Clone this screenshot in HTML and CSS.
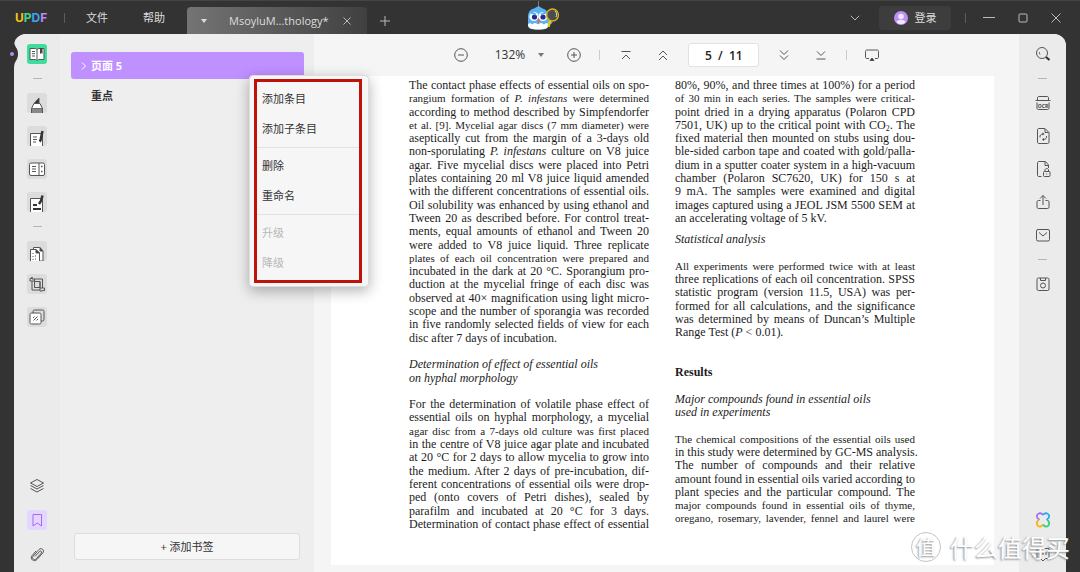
FILE: index.html
```html
<!DOCTYPE html>
<html lang="zh-CN">
<head>
<meta charset="utf-8">
<title>UPDF</title>
<link rel="stylesheet" href="styles.css">
</head>
<body>
<header class="titlebar">
  <div class="logo"><span class="u">U</span><span class="p">P</span><span class="d">D</span><span class="f">F</span></div>
  <span class="vsep"></span>
  <nav class="menus"><button type="button">文件</button><button type="button">帮助</button></nav>
  <div class="tab">
    <span class="tab-caret"></span>
    <span class="tab-name">MsoyluM...thology*</span>
    <button type="button" class="icon-btn" aria-label="关闭标签"><svg width="8" height="8" viewBox="0 0 8 8"><path d="M.5.5l7 7M7.500.5l-7 7"/></svg></button>
  </div>
  <button type="button" class="icon-btn new-tab" aria-label="新标签"><svg width="10" height="10" viewBox="0 0 10 10"><path d="M5 0v10M0 5h10"/></svg></button>
  <svg class="owl" width="34" height="30" viewBox="0 0 34 30">
    <path d="M12.500 0v7" stroke="#999" stroke-width=".7"/>
    <path d="M8 7.500l4.500-2.500 4 2.500c4 1 6 4 6 8.500l4 6-4 2c0 4-4 4.500-10.500 4.500S2 28 2 24V16c0-5 2-7.500 6-8.500z" fill="#59b2f4"/>
    <path d="M2 23.500c2-2 3-1 4 0 2-2 4-2 6 0 2-2 4-2 6 0 2-2 4-1 4.500 0 0 4-3 5-10 5S2 27.500 2 23.500z" fill="#fff"/>
    <circle cx="8" cy="15.500" r="4.500" fill="#fff"/><circle cx="17" cy="15.500" r="4.500" fill="#fff"/>
    <circle cx="8.500" cy="16" r="2.600" fill="#29288f"/><circle cx="17" cy="16" r="2.600" fill="#29288f"/>
    <path d="M4 11l6 2.500M21 11l-6 2.500" stroke="#59b2f4" stroke-width="2"/>
    <path d="M11 19l1.500-1.500L14 19l-1.500 4z" fill="#f06a2c"/>
    <circle cx="26.500" cy="14" r="6" fill="#555" fill-opacity=".75" stroke="#d8b414" stroke-width="1.300"/>
    <path d="M29 10c2 2 2 4 1 6" stroke="#ddd" fill="none"/><path d="M24 20l-1.500 6" stroke="#e8cc16" stroke-width="2.500"/>
  </svg>
  <div class="window-tools">
    <button type="button" class="icon-btn" aria-label="更多"><svg width="10" height="6" viewBox="0 0 10 6"><path d="M.8.800L5 5 9.200.8"/></svg></button>
    <button type="button" class="login"><svg width="14" height="14" viewBox="0 0 14 14"><circle cx="7" cy="7" r="7" fill="#bd8df8"/><circle cx="7" cy="5.500" r="2.800" fill="#f1e7ff"/><path d="M2.500 11c1-3 8-3 9 0-2 3-7 3-9 0z" fill="#f1e7ff"/></svg>登录</button>
    <span class="vsep"></span>
    <button type="button" class="icon-btn" aria-label="最小化"><svg width="12" height="10" viewBox="0 0 12 10"><path d="M0 4.500h12"/></svg></button>
    <button type="button" class="icon-btn" aria-label="最大化"><svg width="10" height="10" viewBox="0 0 10 10"><rect x="1" y="1" width="8" height="8" rx="1"/></svg></button>
    <button type="button" class="icon-btn" aria-label="关闭"><svg width="10" height="10" viewBox="0 0 10 10"><path d="M.5.5l9 9M9.500.5l-9 9"/></svg></button>
  </div>
</header>

<main class="workspace">
  <aside class="rail rail-left">
    <svg class="notch" width="6" height="28" viewBox="0 0 6 28"><path d="M0 0C0 8 4 7 4 14S0 20 0 28z" fill="#333"/></svg>
    <span class="dot"></span>
    <button type="button" class="tool active" aria-label="阅读"><svg width="20" height="20" viewBox="0 0 20 20"><path d="M3 4.500h5.500L10 5.500l1.500-1H17v11h-5.500l-1.500.8-1.500-.8H3z" fill="#fff"/><path d="M10 5.500v10M5 7.500h3M5 9.700h3M5 12h3"/><path d="M13 4h2.500v6l-1.200-1-1.300 1z" fill="#444" stroke="none"/></svg></button>
    <span class="dash"></span>
    <button type="button" class="tool" aria-label="注释"><svg width="20" height="20" viewBox="0 0 20 20"><path d="M7 10.500L12 5v5.500z" fill="#333"/><path d="M7 10.500h6l2.500 5h-11z" fill="#fff"/><path d="M4 15.500h12V20H4z" fill="#888" stroke="none"/><path d="M4.500 20v-4.500M15.500 20v-4.500"/></svg></button>
    <button type="button" class="tool" aria-label="编辑"><svg width="20" height="20" viewBox="0 0 20 20"><path d="M3.500 20V7.500h12V20" fill="#fff"/><path d="M6 11h4M6 13.500h4M6 16h3"/><path d="M15.500 5l-2 9.500-1 1" stroke="#333" stroke-width="2.500"/></svg></button>
    <button type="button" class="tool" aria-label="表单"><svg width="20" height="20" viewBox="0 0 20 20"><rect x="2.500" y="4" width="15" height="12.500" rx="1.500" fill="#fff"/><path d="M12 4v12.500M5 7.500h4M5 10h4M5 12.500h4"/><path d="M14 7.500h1.500M14 12.500h1.500" stroke-width="1.600"/></svg></button>
    <button type="button" class="tool" aria-label="签名"><svg width="20" height="20" viewBox="0 0 20 20"><path d="M3.500 20V6.500h12V20" fill="#fff"/><path d="M6 13h4M6 17h8" stroke="#333" stroke-width="2"/><path d="M15.500 3.500L14 9l-2 3" stroke="#333" stroke-width="2.500"/></svg></button>
    <span class="dash"></span>
    <button type="button" class="tool" aria-label="页面"><svg width="20" height="20" viewBox="0 0 20 20"><path d="M6.500 8V6.500h6l3.500 3.500V20h-3" fill="#fff"/><path d="M3.500 20V8.500H9l3.500 3.500v8" fill="#fff"/><path d="M9 8.500V12h3.500zM13 6.500V10h3z" fill="#333"/><path d="M6 12v1M6 15v1M8 15h1M6 18v1M8 18h1"/></svg></button>
    <button type="button" class="tool" aria-label="裁剪"><svg width="20" height="20" viewBox="0 0 20 20"><path fill-rule="evenodd" d="M5 3v2h10.500v9H17.500v2.500H15.500V17H13V16H5V7H3V4.500h2zM7.500 7.500v6h5.500v-6z" fill="#ddd"/><path d="M7.500 5v8.500M13 16V7.500M5 7h2.500M13 14h2.500"/></svg></button>
    <button type="button" class="tool" aria-label="水印"><svg width="20" height="20" viewBox="0 0 20 20"><rect x="6" y="3" width="11" height="11" rx="1.500" fill="#ddd"/><rect x="3" y="6" width="11" height="11" rx="1.500" fill="#fff"/><path d="M6 11l1.500-1.500M6.500 13.500l4-4M9.500 13.500L11 12"/></svg></button>
    <div class="rail-end">
      <button type="button" class="tool plain" aria-label="图层"><svg width="20" height="20" viewBox="0 0 20 20"><path d="M10 3.500L16.500 7 10 10.500 3.500 7zM3.500 9.500L10 13l6.500-3.500M3.500 12.500L10 16l6.500-3.500"/></svg></button>
      <button type="button" class="tool marked" aria-label="书签"><svg width="20" height="20" viewBox="0 0 20 20"><path d="M6 4.500h8.500V16l-4.200-3L6 16z"/></svg></button>
      <button type="button" class="tool plain" aria-label="附件"><svg width="20" height="20" viewBox="0 0 20 20"><path d="M8 12.500l4.500-5c1.200-1.200 2.800.3 1.800 1.500l-5 5.800c-2 2-5-.3-3.200-2.600l5.800-6.600c2.600-2.500 6 .7 4 3.200L10 15.500c-3 3-7.500-.5-5-3.800l4-4.700"/></svg></button>
    </div>
  </aside>

  <section class="bookmarks">
    <ul>
      <li class="selected"><svg width="6" height="8" viewBox="0 0 6 8"><path d="M1 .5L4.500 4 1 7.500" fill="none" stroke="#fff"/></svg>页面 5</li>
      <li>重点</li>
    </ul>
    <button type="button" class="add">+ 添加书签</button>
  </section>

  <section class="viewer">
    <div class="toolbar">
      <button type="button" class="tb" aria-label="缩小"><svg width="16" height="16" viewBox="0 0 16 16"><circle cx="8" cy="8" r="6.300"/><path d="M5 8h6"/></svg></button>
      <button type="button" class="zoom">132%<span></span></button>
      <button type="button" class="tb" aria-label="放大"><svg width="16" height="16" viewBox="0 0 16 16"><circle cx="8" cy="8" r="6.300"/><path d="M5 8h6M8 5v6"/></svg></button>
      <span class="vsep"></span>
      <button type="button" class="tb first" aria-label="第一页"><svg width="16" height="16" viewBox="0 0 16 16"><path d="M3.500 4.500h9M4 12l4-4 4 4"/></svg></button>
      <button type="button" class="tb prev" aria-label="上一页"><svg width="16" height="16" viewBox="0 0 16 16"><path d="M4 8l4-4 4 4M4 13l4-4 4 4"/></svg></button>
      <input class="page-no" aria-label="页码" value="5  /  11">
      <button type="button" class="tb" aria-label="下一页"><svg width="16" height="16" viewBox="0 0 16 16"><path d="M4 3.500l4 4 4-4M4 8.500l4 4 4-4"/></svg></button>
      <button type="button" class="tb last" aria-label="最后一页"><svg width="16" height="16" viewBox="0 0 16 16"><path d="M4 4.500l4 4 4-4M3.500 12h9"/></svg></button>
      <span class="vsep"></span>
      <button type="button" class="tb show" aria-label="演示"><svg width="16" height="16" viewBox="0 0 16 16"><path d="M5 11.500H3c-1 0-1.500-.5-1.500-1.500V4.500C1.500 3.500 2 3 3 3h10c1 0 1.500.5 1.500 1.500V10c0 1-.5 1.500-1.500 1.500h-2"/><path d="M6 13.500L8 11l2 2.500z" fill="#333"/></svg></button>
    </div>
    <article class="paper">
      <div class="col">
        <p>The contact phase effects of essential oils on spo-</p>
        <p class="tight">rangium formation of <i>P. infestans</i> were determined</p>
        <p>according to method described by Simpfendorfer</p>
        <p class="tight">et al. [9]. Mycelial agar discs (7 mm diameter) were</p>
        <p>aseptically cut from the margin of a 3-days old</p>
        <p>non-sporulating <i>P. infestans</i> culture on V8 juice</p>
        <p>agar. Five mycelial discs were placed into Petri</p>
        <p>plates containing 20 ml V8 juice liquid amended</p>
        <p>with the different concentrations of essential oils.</p>
        <p>Oil solubility was enhanced by using ethanol and</p>
        <p>Tween 20 as described before. For control treat-</p>
        <p>ments, equal amounts of ethanol and Tween 20</p>
        <p>were added to V8 juice liquid. Three replicate</p>
        <p class="tight">plates of each oil concentration were prepared and</p>
        <p>incubated in the dark at 20 °C. Sporangium pro-</p>
        <p>duction at the mycelial fringe of each disc was</p>
        <p>observed at 40× magnification using light micro-</p>
        <p>scope and the number of sporangia was recorded</p>
        <p>in five randomly selected fields of view for each</p>
        <p class="end">disc after 7 days of incubation.</p>
        <div class="gap"></div>
        <p class="end"><i>Determination of effect of essential oils</i></p>
        <p class="end"><i>on hyphal morphology</i></p>
        <div class="gap"></div>
        <p>For the determination of volatile phase effect of</p>
        <p>essential oils on hyphal morphology, a mycelial</p>
        <p class="tight">agar disc from a 7-days old culture was first placed</p>
        <p>in the centre of V8 juice agar plate and incubated</p>
        <p>at 20 °C for 2 days to allow mycelia to grow into</p>
        <p>the medium. After 2 days of pre-incubation, dif-</p>
        <p>ferent concentrations of essential oils were drop-</p>
        <p>ped (onto covers of Petri dishes), sealed by</p>
        <p>parafilm and incubated at 20 °C for 3 days.</p>
        <p>Determination of contact phase effect of essential</p>
      </div>
      <div class="col">
        <p>80%, 90%, and three times at 100%) for a period</p>
        <p class="tight">of 30 min in each series. The samples were critical-</p>
        <p>point dried in a drying apparatus (Polaron CPD</p>
        <p>7501, UK) up to the critical point with CO<sub>2</sub>. The</p>
        <p>fixed material then mounted on stubs using dou-</p>
        <p>ble-sided carbon tape and coated with gold/palla-</p>
        <p>dium in a sputter coater system in a high-vacuum</p>
        <p>chamber (Polaron SC7620, UK) for 150 s at</p>
        <p>9 mA. The samples were examined and digital</p>
        <p>images captured using a JEOL JSM 5500 SEM at</p>
        <p class="end">an accelerating voltage of 5 kV.</p>
        <div class="gap small"></div>
        <p class="end"><i>Statistical analysis</i></p>
        <div class="gap"></div>
        <p class="tight">All experiments were performed twice with at least</p>
        <p>three replications of each oil concentration. SPSS</p>
        <p>statistic program (version 11.5, USA) was per-</p>
        <p>formed for all calculations, and the significance</p>
        <p>was determined by means of Duncan’s Multiple</p>
        <p class="end">Range Test (<i>P</i> &lt; 0.01).</p>
        <div class="gap large"></div>
        <p class="end"><b>Results</b></p>
        <div class="gap"></div>
        <p class="end"><i>Major compounds found in essential oils</i></p>
        <p class="end"><i>used in experiments</i></p>
        <div class="gap"></div>
        <p class="tight">The chemical compositions of the essential oils used</p>
        <p>in this study were determined by GC-MS analysis.</p>
        <p>The number of compounds and their relative</p>
        <p>amount found in essential oils varied according to</p>
        <p>plant species and the particular compound. The</p>
        <p class="tight">major compounds found in essential oils of thyme,</p>
        <p class="tight">oregano, rosemary, lavender, fennel and laurel were</p>
        <div class="gap rest"></div>
      </div>
    </article>
  </section>

  <aside class="rail rail-right">
    <button type="button" class="tool plain" aria-label="搜索"><svg width="20" height="20" viewBox="0 0 20 20"><circle cx="9" cy="9" r="5.500"/><path d="M6.500 8c-.4 1 0 2 .5 2.500"/><path d="M13 13l3.500 3" stroke="#333" stroke-width="2.200"/></svg></button>
    <span class="dash"></span>
    <button type="button" class="tool plain" aria-label="OCR"><svg width="20" height="20" viewBox="0 0 20 20"><path d="M4.500 7.500V5c0-1 .5-1.500 1.500-1.500h8c1 0 1.500.5 1.500 1.500v2.500M2.500 7.500h15M4 9.500V15c0 1 .5 1.500 1.500 1.500h9c1 0 1.500-.5 1.500-1.500V9.500"/><text x="10" y="14.500" text-anchor="middle">OCR</text></svg></button>
    <button type="button" class="tool plain" aria-label="转换"><svg width="20" height="20" viewBox="0 0 20 20"><path d="M12 2.500H6c-1 0-1.500.5-1.500 1.500v12c0 1 .5 1.500 1.500 1.500h8.500c1 0 1.500-.5 1.500-1.500V6.500zM12 3v3.500h3.500"/><path d="M7 11.500c-.5-2 1-3.500 3-3.500M13.500 10c.5 2-1 3.500-3 3.500"/><path d="M9.500 6.500L11.500 8l-2 1.500zM11 12l-2 1.500 2 1.500z" fill="#444" stroke="none"/></svg></button>
    <button type="button" class="tool plain" aria-label="加密"><svg width="20" height="20" viewBox="0 0 20 20"><path d="M8.500 17.500H6c-1 0-1.500-.5-1.500-1.500V4c0-1 .5-1.500 1.500-1.500h6.500L15.500 6v3M12 3v3.500h3.500"/><rect x="10.500" y="12.500" width="6.500" height="5" rx="1"/><path d="M12 12.500V11c0-2 3.500-2 3.500 0v1.500M13.700 14.500v1"/></svg></button>
    <button type="button" class="tool plain" aria-label="分享"><svg width="20" height="20" viewBox="0 0 20 20"><path d="M7.500 8.500H5.500c-1 0-1.500.5-1.500 1.500v5c0 1 .5 1.500 1.500 1.500h9c1 0 1.500-.5 1.500-1.500v-5c0-1-.5-1.500-1.500-1.500h-2M10 13V3.500M7 6.500l3-3 3 3"/></svg></button>
    <button type="button" class="tool plain" aria-label="邮件"><svg width="20" height="20" viewBox="0 0 20 20"><rect x="3.500" y="4.500" width="13" height="11.500" rx="1.500"/><path d="M6 7.500l4 3.500 4-3.500"/></svg></button>
    <span class="dash"></span>
    <button type="button" class="tool plain" aria-label="保存"><svg width="20" height="20" viewBox="0 0 20 20"><rect x="4" y="4" width="12" height="12.500" rx="1.500"/><circle cx="10" cy="11.500" r="2.500"/><path d="M7.500 4v2.500h5V4"/></svg></button>
    <div class="rail-end">
      <button type="button" class="tool plain" aria-label="AI 助手"><svg width="20" height="20" viewBox="0 0 20 20"><g stroke-width="1.800"><path d="M10 5C7 1 2 5 4.500 8c.5.700 1.500 1 1.500 2" stroke="#a070f0"/><path d="M10 5c3-4 8 0 5.500 3-.5.700-1.500 1-1.500 2" stroke="#2ea5f2"/><path d="M14 10c4 2 2 7-1.500 6.500-1 0-1.500-1.500-2.500-1.500" stroke="#35cf8b"/><path d="M6 10c-4 2-2 7 1.500 6.500 1 0 1.500-1.500 2.500-1.500" stroke="#f5b716"/></g></svg></button>
      <button type="button" class="tool plain" aria-label="反馈"><svg width="20" height="20" viewBox="0 0 20 20"><path d="M4 4.500h12v10h-3.500L10 17l-2.500-2.500H4zM7 8v3M10 7v4M13 8v3"/></svg></button>
    </div>
  </aside>
</main>

<div class="context-menu" role="menu">
  <div class="frame">
    <div class="group"><button type="button" role="menuitem">添加条目</button><button type="button" role="menuitem">添加子条目</button></div>
    <div class="group"><button type="button" role="menuitem">删除</button><button type="button" role="menuitem">重命名</button></div>
    <div class="group"><button type="button" role="menuitem" disabled>升级</button><button type="button" role="menuitem" disabled>降级</button></div>
  </div>
</div>
<div class="watermark"><span class="seal">值</span><span>什么值得买</span></div>
</body>
</html>
```
FILE: styles.css
```css
* { box-sizing: border-box; }

body {
  margin: 0;
  height: 100vh;
  display: flex;
  flex-direction: column;
  overflow: hidden;
  background: #333;
  color: #333;
  font: 11px/16px "Open Sans", "Noto Sans CJK SC", sans-serif;
}

button {
  padding: 0;
  border: 0;
  background: none;
  color: inherit;
  font: inherit;
}

svg { display: block; }
p, ul { margin: 0; padding: 0; list-style: none; }

/* Title bar */
.titlebar {
  flex: none;
  height: 34px;
  display: flex;
  align-items: center;
  padding-left: 15px;
  color: #ddd;
  border-top: 1px solid #444;
}

.logo { width: 33px; font: 700 12px/16px Inter, sans-serif; }
.u { color: #f7c514; }
.p { color: #3fd68f; }
.d { color: #3ba4ee; }
.f { color: #b98af5; }

.vsep { width: 1px; height: 10px; background: #5c5c5c; }
.titlebar > .vsep { margin-left: 16px; }
.menus { display: flex; gap: 35px; margin-left: 21px; }

.tab {
  align-self: flex-end;
  width: 180px;
  height: 27px;
  margin-left: 22px;
  padding: 0 16px 0 14px;
  display: flex;
  align-items: center;
  border-radius: 4px 4px 0 0;
  background: linear-gradient(90deg, #747474, #404040);
}

.tab-name { margin: 0 auto 0 22px; }
.tab-caret { border: 3px solid transparent; border-top: 4px solid #ddd; border-bottom: 0; }
.icon-btn svg { fill: none; stroke: #bbb; }
.new-tab { margin: 6px 0 0 13px; }
.owl { align-self: flex-start; margin-left: 136px; }

.window-tools { display: flex; align-items: center; margin-left: auto; padding-right: 19px; }
.login {
  display: flex;
  align-items: center;
  justify-content: center;
  gap: 7px;
  width: 72px;
  height: 24px;
  margin: 0 14px 0 19px;
  border-radius: 4px;
  background: #3d3d3d;
}
.window-tools .vsep { margin-right: 17px; }
.window-tools .vsep ~ .icon-btn + .icon-btn { margin-left: 23px; }

/* Workspace */
.workspace {
  flex: 1;
  min-height: 0;
  margin: 0 14px;
  display: grid;
  grid-template-columns: 46px 254px 1fr 47px;
  background: #eee;
  border-radius: 12px 12px 0 0;
}

.rail {
  position: relative;
  display: flex;
  flex-direction: column;
  align-items: center;
  gap: 13px;
  padding: 10px 0 8px;
  background: #ebebeb;
}
.rail-left { border-radius: 12px 0 0; }
.rail-right { border-radius: 0 12px 0 0; }
.notch { position: absolute; left: 0; top: 6px; }
.dot {
  position: absolute;
  left: -4px;
  top: 18px;
  width: 4px;
  height: 4px;
  border-radius: 2px;
  background: #b98af5;
}

.tool { width: 20px; height: 20px; border-radius: 3px; background: #dcdcdc; }
.tool svg { fill: none; stroke: #555; stroke-width: 1; }
.tool text { fill: #444; stroke: none; font: 700 5px "Open Sans", sans-serif; }
.tool.plain { background: none; }
.tool.active { background: #3fdc9b; }
.tool.marked { background: #e5d6ff; }
.tool.marked svg { stroke: #a66bf0; }
.dash { width: 9px; height: 1px; margin: 1px 0; background: #b5b5b5; }
.rail-end { margin-top: auto; display: flex; flex-direction: column; gap: 14px; }

/* Bookmarks */
.bookmarks {
  display: flex;
  flex-direction: column;
  justify-content: space-between;
  padding: 18px 10px 12px 11px;
}
.bookmarks li { padding: 8px 20px; font-weight: 700; line-height: 18px; }
.bookmarks .selected {
  display: flex;
  align-items: center;
  gap: 4px;
  height: 27px;
  padding: 0 10px;
  border-radius: 3px;
  background: #bf90ff;
  color: #fff;
}
.add {
  height: 27px;
  margin: 0 4px 0 3px;
  border: 1px solid #ddd;
  border-radius: 3px;
  background: #f6f6f6;
}

/* Viewer */
.viewer {
  min-width: 0;
  min-height: 0;
  display: flex;
  flex-direction: column;
  padding-bottom: 7px;
  background: #f5f5f5;
}
.toolbar {
  flex: none;
  height: 42px;
  display: flex;
  align-items: center;
  justify-content: center;
}
.tb svg { fill: none; stroke: #555; stroke-width: 1; }
.toolbar .vsep { background: #ccc; }
.zoom {
  display: flex;
  align-items: center;
  gap: 13px;
  margin: 0 22px 0 26px;
  font-size: 12px;
}
.zoom span { border: 3px solid transparent; border-top: 4px solid #777; border-bottom: 0; }
.toolbar .tb + .vsep { margin-left: 17px; }
.first { margin-left: 18px; }
.prev { margin: 0 17px 0 21px; }
.page-no {
  width: 71px;
  height: 24px;
  margin-right: 17px;
  padding: 0;
  border: 1px solid #e2e2e2;
  border-radius: 3px;
  background: #fff;
  color: #222;
  font: 600 12px/16px "Open Sans", sans-serif;
  text-align: center;
  white-space: pre;
}
.last { margin-left: 21px; }
.show { margin-left: 17px; }

/* Lines share the height of the page evenly */
.paper {
  flex: 1;
  min-height: 0;
  display: grid;
  grid-template-columns: 1fr 1fr;
  gap: 26px;
  margin: 0 25px 0 17px;
  padding: 3px 79px 34px 78px;
  background: #fff;
  color: #1c1c1c;
  font: 12px/13px "Liberation Serif", serif;
}
.col { display: flex; flex-direction: column; min-width: 0; }
.col p {
  flex: 1 1 0;
  min-height: 0;
  white-space: nowrap;
  text-align: justify;
  text-align-last: justify;
}
.col .end { text-align-last: left; }
.col .tight { font-size: 11px; }
.col sub { font-size: 8px; line-height: 0; vertical-align: -2px; }
.gap { flex: 1 1 0; }
.gap.small { flex-grow: 0.6; }
.gap.large { flex-grow: 2; }
.gap.rest { flex-grow: 0.4; }

/* Context menu */
.context-menu {
  position: absolute;
  left: 249px;
  top: 75px;
  padding: 3px 6px 3px 4px;
  border: 1px solid #ddd;
  border-radius: 4px;
  background: #f6f6f6;
  box-shadow: 0 4px 14px rgba(0, 0, 0, 0.3);
}
.frame { width: 108px; border: 3px solid #bf1208; }
.group { display: flex; flex-direction: column; padding: 3px 0; }
.group:first-child { padding-top: 2px; }
.group:last-child { padding-bottom: 2px; }
.group + .group { border-top: 1px solid #e2e2e2; }
.group button { height: 30px; padding-left: 5px; text-align: left; }
.group button:disabled { color: #b8b8b8; }

/* Watermark */
.watermark {
  position: absolute;
  right: 10px;
  bottom: 10px;
  display: flex;
  align-items: center;
  gap: 9px;
  color: #fff;
  font: 24px/30px "Noto Sans CJK SC", sans-serif;
  text-shadow: -1px 1px 2px #888;
}
.seal {
  width: 30px;
  height: 30px;
  border: 1px solid #c4c4c4;
  border-radius: 50%;
  font-size: 20px;
  line-height: 28px;
  text-align: center;
}
```
